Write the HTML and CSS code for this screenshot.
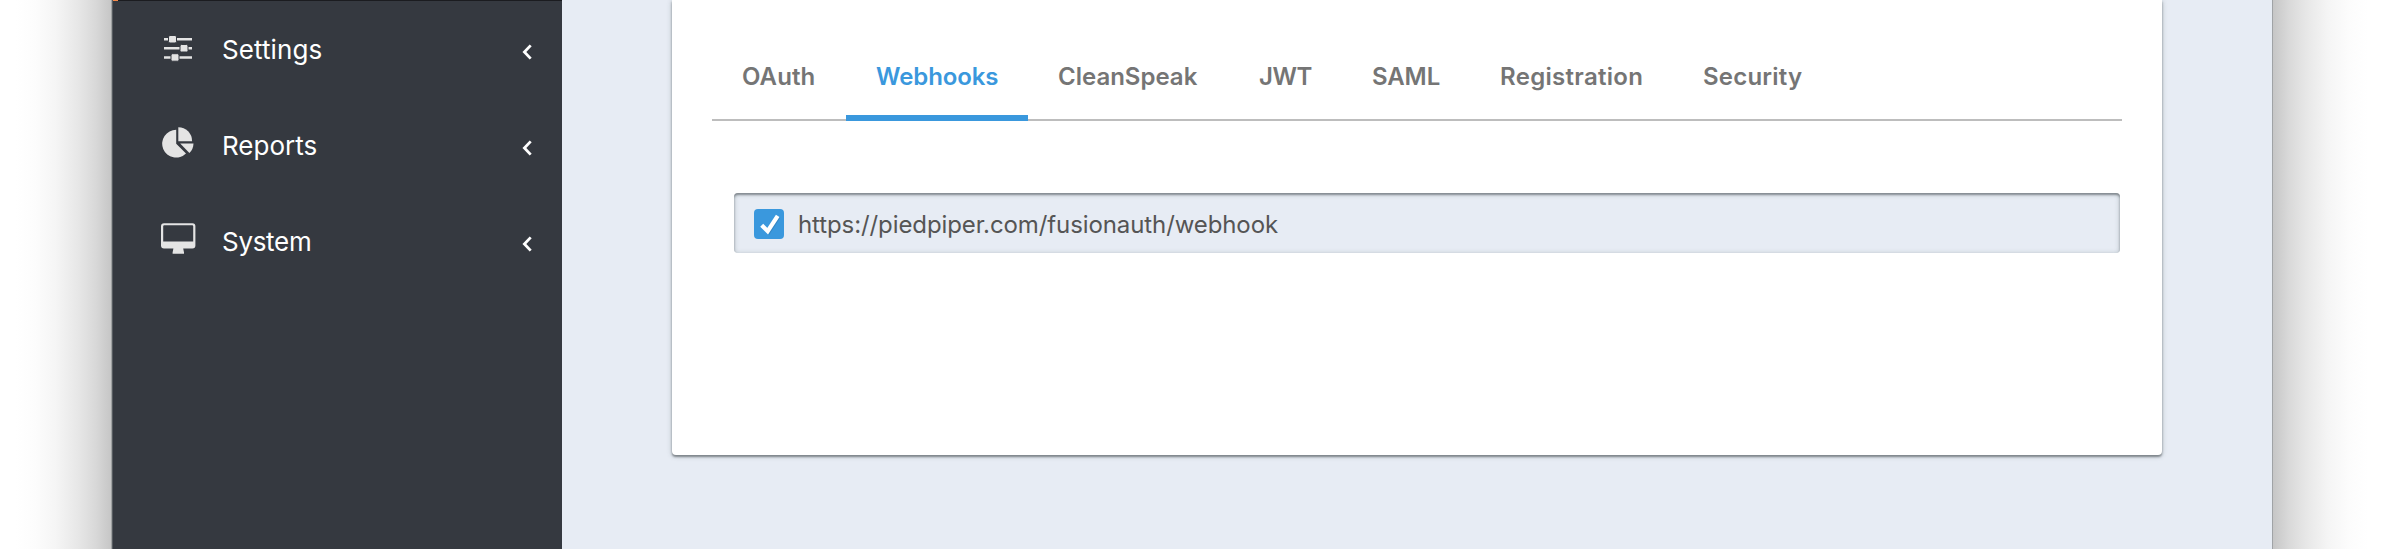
FILE: index.html
```
<!DOCTYPE html>
<html lang="en">
<head>
<meta charset="utf-8">
<title>Webhooks</title>
<link rel="stylesheet" href="styles.css">
</head>
<body>
<div class="window">
  <nav class="sidebar">
    <div class="sidebar-top"><span class="accent"></span></div>
    <a class="nav-item">
      <svg class="nav-icon" viewBox="0 0 36 36"><path d="M4 9.200h28M4 18.300h28M4 27.500h28" stroke="#e4e4e4" stroke-width="2.500" fill="none"/><g fill="#e4e4e4" stroke="#353940" stroke-width="1"><rect x="8.500" y="5.500" width="8" height="7.500" rx="1.500"/><rect x="20" y="14.500" width="8" height="7.500" rx="1.500"/><rect x="11" y="23.700" width="8" height="7.500" rx="1.500"/></g></svg>
      <span class="nav-label settings">Settings</span>
      <svg class="chevron" viewBox="0 0 12 16"><path d="M9.700 1.400L3.400 8l6.300 6.600" /></svg>
    </a>
    <a class="nav-item">
      <svg class="nav-icon" viewBox="0 0 36 36"><g fill="#e4e4e4"><path d="M16.200 3.800V17.800L26 27.600A14 13.900 0 1 1 16.200 3.800Z"/><path d="M18.300 1.200A13.900 13.900 0 0 1 32.100 15.200H18.300Z"/><path d="M20.200 17.400H33.500A14 14 0 0 1 29.400 27Z"/></g></svg>
      <span class="nav-label reports">Reports</span>
      <svg class="chevron" viewBox="0 0 12 16"><path d="M9.700 1.400L3.400 8l6.300 6.600" /></svg>
    </a>
    <a class="nav-item">
      <svg class="nav-icon" viewBox="0 0 36 36"><path fill="#e4e4e4" fill-rule="evenodd" d="M4 1.200H32.400A3 3 0 0 1 35.400 4.200V23.400A3 3 0 0 1 32.400 26.400H23.200L24 30.400V31.700H12.600V30.400L13.400 26.400H4A3 3 0 0 1 1 23.400V4.200A3 3 0 0 1 4 1.200ZM4.200 3.200A1 1 0 0 0 3.200 4.200V19.600H33.200V4.200A1 1 0 0 0 32.200 3.200Z"/></svg>
      <span class="nav-label system">System</span>
      <svg class="chevron" viewBox="0 0 12 16"><path d="M9.700 1.400L3.400 8l6.300 6.600" /></svg>
    </a>
  </nav>
  <main class="content">
    <section class="panel">
      <div class="tabs">
        <a class="tab oauth">OAuth</a>
        <a class="tab webhooks active">Webhooks</a>
        <a class="tab cleanspeak">CleanSpeak</a>
        <a class="tab jwt">JWT</a>
        <a class="tab saml">SAML</a>
        <a class="tab registration">Registration</a>
        <a class="tab security">Security</a>
      </div>
      <label class="option">
        <svg class="checkbox" viewBox="0 0 30 30"><rect width="30" height="30" rx="4" fill="#3a98dd"/><path class="tick-shadow" d="M9 17.500L14.800 23.500L25 8"/><path class="tick" d="M7.700 16.200L13.700 22.200L23.700 6.800"/></svg>
        <span class="url">https://piedpiper.com/fusionauth/webhook</span>
      </label>
    </section>
  </main>
</div>
</body>
</html>
```
FILE: styles.css
```
* { box-sizing: border-box; }
body {
  margin: 0;
  height: 549px;
  overflow: hidden;
  background: linear-gradient(90deg, #fff 16px, #fcfcfc 36px, #f5f5f5 56px, #e7e7e7 78px, #d8d8d8 96px, #c6c6c6 111px, #c6c6c6 2273px, #d8d8d8 2288px, #e7e7e7 2306px, #f5f5f5 2328px, #fcfcfc 2348px, #fff 2368px);
  font-family: Inter, "Liberation Sans", sans-serif;
}
.window {
  display: flex;
  width: 2162px;
  height: 549px;
  margin-left: 111px;
  border-left: 1px solid #a0a2a3;
  border-right: 1px solid #a0a3a6;
}
.sidebar {
  width: 450px;
  background: #353940;
  border-left: 1px solid #555a5f;
}
.sidebar-top { height: 2px; border-top: 1px solid #1b1c20; }
.accent { display: block; width: 5px; height: 1px; margin-top: -1px; background: #f58a4b; }
.nav-item {
  display: flex;
  align-items: center;
  height: 96px;
  padding: 0 29px 0 47px;
  color: #fff;
  font-size: 26px;
}
.nav-icon { width: 36px; height: 36px; margin-top: -4px; }
.nav-label { flex: 1; margin-left: 26px; line-height: 36px; white-space: nowrap; }
.settings { letter-spacing: .1px; }
.system { letter-spacing: -.3px; }
.chevron { width: 12px; height: 16px; margin-top: 4px; }
.chevron path { fill: none; stroke: #fff; stroke-width: 2.8; }
.content {
  flex: 1;
  background: #e7ecf4;
  padding: 0 110px;
}
.panel {
  height: 455px;
  padding: 0 40px;
  background: #fff;
  border-radius: 0 0 4px 4px;
  box-shadow: 0 2px 2px rgba(60, 65, 70, .5), 0 1px 5px rgba(60, 80, 80, .35);
}
.tabs {
  display: flex;
  height: 121px;
  padding-top: 32px;
  border-bottom: 2px solid #bdbdbd;
}
.tab {
  height: 89px;
  padding-left: 30px;
  color: #757575;
  font-size: 24px;
  font-weight: 560;
  line-height: 90px;
  white-space: nowrap;
}
.active { color: #3a98dd; border-bottom: 6px solid #3a98dd; }
.oauth { width: 134px; letter-spacing: .1px; }
.webhooks { width: 182px; letter-spacing: -.1px; }
.cleanspeak { width: 201px; }
.jwt { width: 113px; letter-spacing: -.5px; }
.saml { width: 128px; letter-spacing: -.1px; }
.registration { width: 203px; letter-spacing: .3px; }
.security { width: 160px; letter-spacing: .2px; }
.option {
  display: flex;
  align-items: center;
  height: 60px;
  margin: 72px 2px 0 22px;
  padding-left: 20px;
  background: #e7ecf4;
  border-radius: 4px;
  box-shadow: inset 0 2px 2px rgba(60, 65, 70, .45), inset 0 1px 5px rgba(60, 80, 80, .35);
}
.checkbox { width: 30px; height: 30px; margin-top: 2px; }
.tick { fill: none; stroke: #fff; stroke-width: 4.2; }
.tick-shadow { fill: none; stroke: #2f7db9; stroke-width: 3; opacity: .7; }
.url { margin: 3px 0 0 14px; color: #555; font-size: 24px; line-height: 34px; letter-spacing: -.1px; }
```
